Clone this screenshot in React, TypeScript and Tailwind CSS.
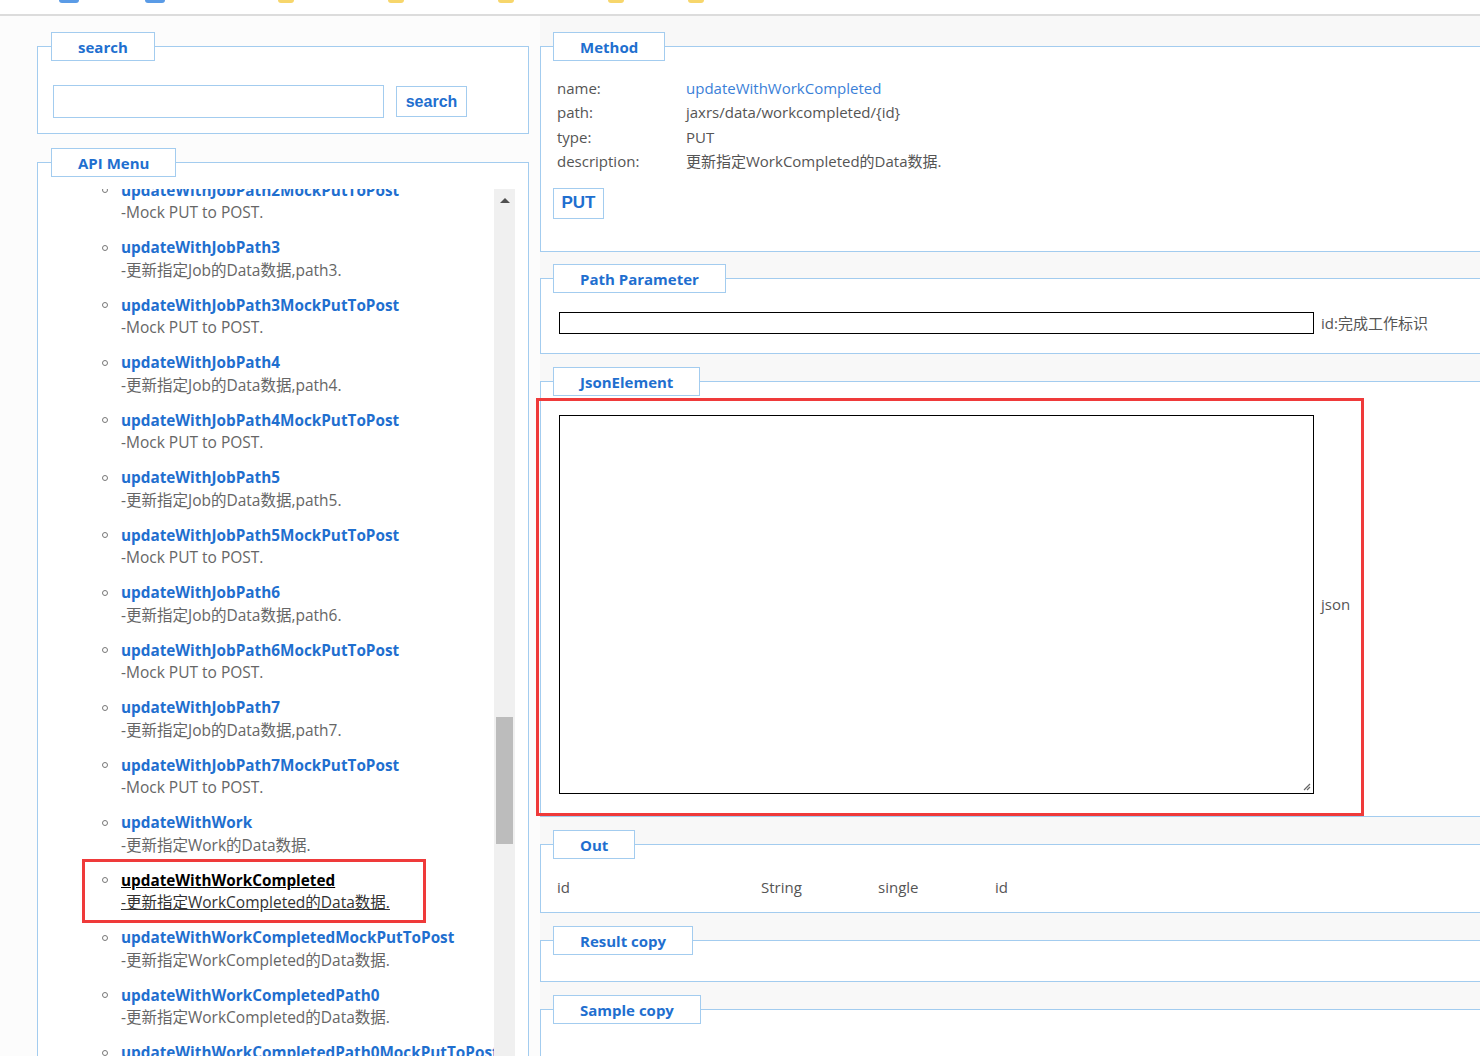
import React from 'react';

const FONT = { fontFamily: '"Open Sans", "Noto Sans CJK SC", sans-serif' };

type Item = { name: string; desc: string; active?: boolean };

const items: Item[] = [
  { name: 'updateWithJobPath2MockPutToPost', desc: '-Mock PUT to POST.' },
  { name: 'updateWithJobPath3', desc: '-更新指定Job的Data数据,path3.' },
  { name: 'updateWithJobPath3MockPutToPost', desc: '-Mock PUT to POST.' },
  { name: 'updateWithJobPath4', desc: '-更新指定Job的Data数据,path4.' },
  { name: 'updateWithJobPath4MockPutToPost', desc: '-Mock PUT to POST.' },
  { name: 'updateWithJobPath5', desc: '-更新指定Job的Data数据,path5.' },
  { name: 'updateWithJobPath5MockPutToPost', desc: '-Mock PUT to POST.' },
  { name: 'updateWithJobPath6', desc: '-更新指定Job的Data数据,path6.' },
  { name: 'updateWithJobPath6MockPutToPost', desc: '-Mock PUT to POST.' },
  { name: 'updateWithJobPath7', desc: '-更新指定Job的Data数据,path7.' },
  { name: 'updateWithJobPath7MockPutToPost', desc: '-Mock PUT to POST.' },
  { name: 'updateWithWork', desc: '-更新指定Work的Data数据.' },
  { name: 'updateWithWorkCompleted', desc: '-更新指定WorkCompleted的Data数据.', active: true },
  { name: 'updateWithWorkCompletedMockPutToPost', desc: '-更新指定WorkCompleted的Data数据.' },
  { name: 'updateWithWorkCompletedPath0', desc: '-更新指定WorkCompleted的Data数据.' },
  { name: 'updateWithWorkCompletedPath0MockPutToPost', desc: '-更新指定WorkCompleted的Data数据.' },
];

function Legend({ children }: { children: React.ReactNode }) {
  return (
    <legend className="h-[29px] px-[26px] border border-[#a3ccef] bg-white text-[15px] font-bold leading-[28px] text-[#1f6fcf]">
      {children}
    </legend>
  );
}

function Box({ title, className, children }: { title: string; className?: string; children?: React.ReactNode }) {
  return (
    <fieldset className={`min-w-0 border border-[#a3ccef] bg-white px-[12px] ${className ?? ''}`}>
      <Legend>{title}</Legend>
      {children}
    </fieldset>
  );
}

export default function App() {
  return (
    <div className="w-[1480px] h-[1056px] overflow-hidden bg-[#fcfcfc] text-[#555]" style={FONT}>
      {/* top toolbar, mostly scrolled away */}
      <div className="h-[16px] border-b-2 border-[#dcdcdc] bg-white flex items-start">
        <div className="ml-[59px] w-[20px] h-[3px] rounded-b-sm bg-[#5a9be6]" />
        <div className="ml-[66px] w-[20px] h-[3px] rounded-b-sm bg-[#5a9be6]" />
        <div className="ml-[113px] w-[16px] h-[3px] rounded-b-sm bg-[#f7d66b]" />
        <div className="ml-[94px] w-[16px] h-[3px] rounded-b-sm bg-[#f7d66b]" />
        <div className="ml-[94px] w-[16px] h-[3px] rounded-b-sm bg-[#f7d66b]" />
        <div className="ml-[94px] w-[16px] h-[3px] rounded-b-sm bg-[#f7d66b]" />
        <div className="ml-[64px] w-[16px] h-[3px] rounded-b-sm bg-[#f7d66b]" />
      </div>

      <div className="flex">
        {/* left column */}
        <div className="pl-[37px] pt-[16px] w-[540px] shrink-0">
          <fieldset className="min-w-0 w-[492px] border border-[#a3ccef] bg-white px-[13px] pb-[15px]">
            <Legend>search</Legend>
            <div className="flex items-center mt-[24px]">
              <div className="ml-[2px] w-[331px] h-[33px] border border-[#a3ccef] bg-white" />
              <button
                className="ml-[12px] w-[71px] h-[31px] border border-[#a3ccef] bg-white text-[16px] font-bold text-[#1f6fcf]"
                style={{ fontFamily: '"Liberation Sans", Arial, sans-serif' }}
              >
                search
              </button>
            </div>
          </fieldset>

          <fieldset className="min-w-0 mt-[14px] w-[492px] h-[1000px] border border-[#a3ccef] bg-white px-[13px]">
            <Legend>API Menu</Legend>
            <div className="mt-[12px] flex h-[880px]">
              <div className="flex-1 min-w-0 overflow-hidden">
                <ul className="-mt-[10px] pl-[51px]">
                  {items.map((it) => (
                    <li key={it.name} className="relative h-[57.5px]">
                      {it.active && (
                        <div className="absolute left-[-20px] top-[-10px] w-[344px] h-[64px] border-[3px] border-[#ef3a3a]" />
                      )}
                      <div className="flex items-center h-[22px] whitespace-nowrap">
                        <span className="w-[6px] h-[6px] rounded-full border border-[#777] mr-[13px] shrink-0" />
                        <span
                          className={`text-[15.3px] font-bold ${it.active ? 'text-black underline' : 'text-[#1f6fcf]'}`}
                        >
                          {it.name}
                        </span>
                      </div>
                      <div
                        className={`pl-[19px] h-[23px] leading-[23px] text-[15.5px] whitespace-nowrap ${
                          it.active ? 'text-[#333] underline' : 'text-[#666]'
                        }`}
                      >
                        {it.desc}
                      </div>
                    </li>
                  ))}
                </ul>
              </div>
              {/* scrollbar */}
              <div className="w-[21px] shrink-0 bg-[#f0f0f0] flex flex-col items-center">
                <div className="mt-[9px] w-0 h-0 border-l-[5px] border-r-[5px] border-b-[5px] border-l-transparent border-r-transparent border-b-[#505050]" />
                <div className="mt-[514px] w-[17px] h-[127px] bg-[#bcbcbc]" />
              </div>
            </div>
          </fieldset>
        </div>

        {/* right column */}
        <div className="w-[980px] shrink-0 pt-[16px] bg-[#f8f8f8]">
          <Box title="Method" className="pb-[32px]">
            <div className="mt-[15px] pl-[4px] text-[15px] leading-[24.4px]">
              {[
                ['name:', 'updateWithWorkCompleted'],
                ['path:', 'jaxrs/data/workcompleted/{id}'],
                ['type:', 'PUT'],
                ['description:', '更新指定WorkCompleted的Data数据.'],
              ].map(([k, v], i) => (
                <div key={k} className="flex">
                  <span className="w-[129px]">{k}</span>
                  <span className={i === 0 ? 'text-[#3b7fd8]' : 'text-[#555]'}>{v}</span>
                </div>
              ))}
            </div>
            <button
              className="mt-[14px] w-[51px] h-[31px] border border-[#a3ccef] bg-white text-[17px] font-bold text-[#1f6fcf]"
              style={{ fontFamily: '"Liberation Sans", Arial, sans-serif' }}
            >
              PUT
            </button>
          </Box>

          <Box title="Path Parameter" className="mt-[12px] pb-[19px]">
            <div className="mt-[19px] flex items-center">
              <div className="ml-[6px] w-[755px] h-[22px] border border-black bg-white" />
              <span className="ml-[7px] text-[15px]">id:完成工作标识</span>
            </div>
          </Box>

          <Box title="JsonElement" className="mt-[13px] pb-[22px]">
            <div className="relative mt-[19px] flex items-center">
              <div className="absolute left-[-17px] top-[-17px] w-[828px] h-[418px] border-[3px] border-[#ef3a3a]" />
              <div className="relative ml-[6px] w-[755px] h-[379px] border border-black bg-white">
                <svg className="absolute right-[2px] bottom-[2px]" width="10" height="10" viewBox="0 0 10 10">
                  <path d="M9 3 L3 9 M9 6 L6 9" stroke="#666" strokeWidth="1.2" />
                </svg>
              </div>
              <span className="ml-[7px] text-[15px]">json</span>
            </div>
          </Box>

          <Box title="Out" className="mt-[13px] pb-[14px]">
            <div className="mt-[17px] pl-[4px] flex text-[15px] leading-[22px]">
              <span className="w-[204px]">id</span>
              <span className="w-[117px]">String</span>
              <span className="w-[117px]">single</span>
              <span>id</span>
            </div>
          </Box>

          <Box title="Result copy" className="mt-[13px] h-[56px]" />

          <Box title="Sample copy" className="mt-[13px] h-[120px]" />
        </div>
      </div>
    </div>
  );
}
